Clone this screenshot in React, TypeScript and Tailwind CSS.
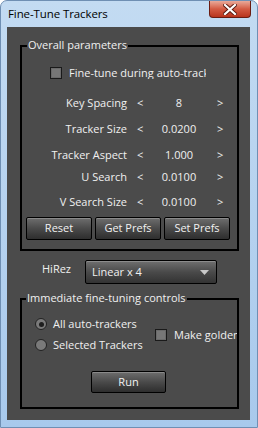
import React from "react";

const FONT = { fontFamily: '"Open Sans", "Noto Sans", Arial, sans-serif' };

function Btn({ label, w }: { label: string; w: string }) {
  return (
    <div
      className={`${w} h-full flex items-center justify-center border border-black rounded-[2px] bg-gradient-to-b from-[#6e6e6e] via-[#4a4a4a] to-[#2e2e2e] shadow-[inset_0_1px_0_#8a8a8a] text-[#f2f2f2]`}
    >
      {label}
    </div>
  );
}

function Checkbox() {
  return (
    <div className="w-[12px] h-[12px] shrink-0 border border-[#1a1a1a] bg-[#777777] shadow-[inset_0_0_0_1px_#6a6a6a]" />
  );
}

function Radio({ checked }: { checked?: boolean }) {
  return (
    <div className="w-[12px] h-[12px] shrink-0 rounded-full border border-[#222] bg-[#7a7a7a] flex items-center justify-center">
      {checked && <div className="w-[5px] h-[5px] rounded-full bg-[#1e1e1e]" />}
    </div>
  );
}

const rows = [
  { label: "Key Spacing", value: "8", mt: "mt-[16px]" },
  { label: "Tracker Size", value: "0.0200", mt: "mt-[10px]" },
  { label: "Tracker Aspect", value: "1.000", mt: "mt-[10px]" },
  { label: "U Search", value: "0.0100", mt: "mt-[6px]" },
  { label: "V Search Size", value: "0.0100", mt: "mt-[9px]" },
];

export default function App() {
  return (
    <div
      className="relative w-[258px] h-[428px] rounded-t-[7px] bg-gradient-to-b from-[#c3dbf2] to-[#a8c9ec] border border-[#6f8fb3] overflow-hidden"
      style={FONT}
    >
      {/* title bar */}
      <div className="h-[26px] flex items-center pl-[7px] text-[11.5px] tracking-[-0.1px] text-black">
        Fine-Tune Trackers
      </div>
      <div className="absolute top-0 right-[6px] w-[42px] h-[17px] rounded-b-[4px] border border-t-0 border-[#6b1c12] bg-gradient-to-b from-[#e8a999] via-[#d35a42] to-[#b8331c] flex items-center justify-center">
        <svg width="14" height="11" viewBox="0 0 14 11">
          <path d="M2 1 L12 10 M12 1 L2 10" stroke="#5a1a10" strokeWidth="4" strokeLinecap="square" />
          <path d="M2 1 L12 10 M12 1 L2 10" stroke="#ffffff" strokeWidth="2.2" strokeLinecap="square" />
        </svg>
      </div>

      {/* client area */}
      <div className="ml-[6px] w-[243px] h-[393px] bg-[#4b4b4b] pt-[18px] text-[11px] text-[#f0f0f0] flex flex-col">
        {/* Overall parameters */}
        <div className="relative ml-[13px] w-[219px] h-[206px] border-2 border-black flex flex-col">
          <div className="absolute -top-[10px] left-[5px] px-[1px] bg-[#4b4b4b] leading-[16px]">
            Overall parameters
          </div>
          <div className="mt-[20px] ml-[28px] w-[156px] h-[12px] flex items-center gap-[7px] overflow-hidden whitespace-nowrap">
            <Checkbox />
            <span className="leading-[16px]">Fine-tune during auto-tracking</span>
          </div>
          {rows.map((r) => (
            <div key={r.label} className={`${r.mt} h-[16px] flex items-center leading-[16px]`}>
              <span className="w-[105px] text-right">{r.label}</span>
              <span className="ml-[10px] w-[6px]">&lt;</span>
              <span className="w-[72px] text-center">{r.value}</span>
              <span className="ml-[2px]">&gt;</span>
            </div>
          ))}
          <div className="mt-[7px] ml-[4px] h-[23px] flex gap-[3px]">
            <Btn label="Reset" w="w-[66px]" />
            <Btn label="Get Prefs" w="w-[66px]" />
            <Btn label="Set Prefs" w="w-[66px]" />
          </div>
        </div>

        {/* HiRez */}
        <div className="mt-[9px] ml-[35px] h-[24px] flex items-start">
          <span className="w-[43px] mt-[1px] leading-[16px]">HiRez</span>
          <div className="w-[132px] h-full border border-black rounded-[2px] bg-gradient-to-b from-[#707070] via-[#4a4a4a] to-[#333333] shadow-[inset_0_1px_0_#8c8c8c] flex items-center justify-between pl-[6px] pr-[7px]">
            <span className="leading-[16px]">Linear x 4</span>
            <svg width="9" height="5" viewBox="0 0 9 5">
              <path d="M0 0 L9 0 L4.5 5 Z" fill="#c8c8c8" />
            </svg>
          </div>
        </div>

        {/* Immediate fine-tuning controls */}
        <div className="relative mt-[14px] ml-[13px] w-[219px] h-[111px] border-2 border-black flex flex-col">
          <div className="absolute -top-[10px] left-[4px] px-[1px] bg-[#4b4b4b] leading-[16px]">
            Immediate fine-tuning controls
          </div>
          <div className="mt-[16px] flex items-center">
            <div className="ml-[13px] w-[120px] flex flex-col gap-[5px]">
              <div className="h-[16px] flex items-center gap-[6px] whitespace-nowrap">
                <Radio checked />
                <span className="leading-[16px]">All auto-trackers</span>
              </div>
              <div className="h-[16px] flex items-center gap-[6px] whitespace-nowrap">
                <Radio />
                <span className="leading-[16px]">Selected Trackers</span>
              </div>
            </div>
            <div className="flex-1 min-w-0 flex items-center gap-[7px] overflow-hidden whitespace-nowrap">
              <Checkbox />
              <span className="leading-[16px]">Make golden</span>
            </div>
          </div>
          <div className="mt-[18px] ml-[69px] h-[22px] flex">
            <Btn label="Run" w="w-[75px]" />
          </div>
        </div>
      </div>
    </div>
  );
}
